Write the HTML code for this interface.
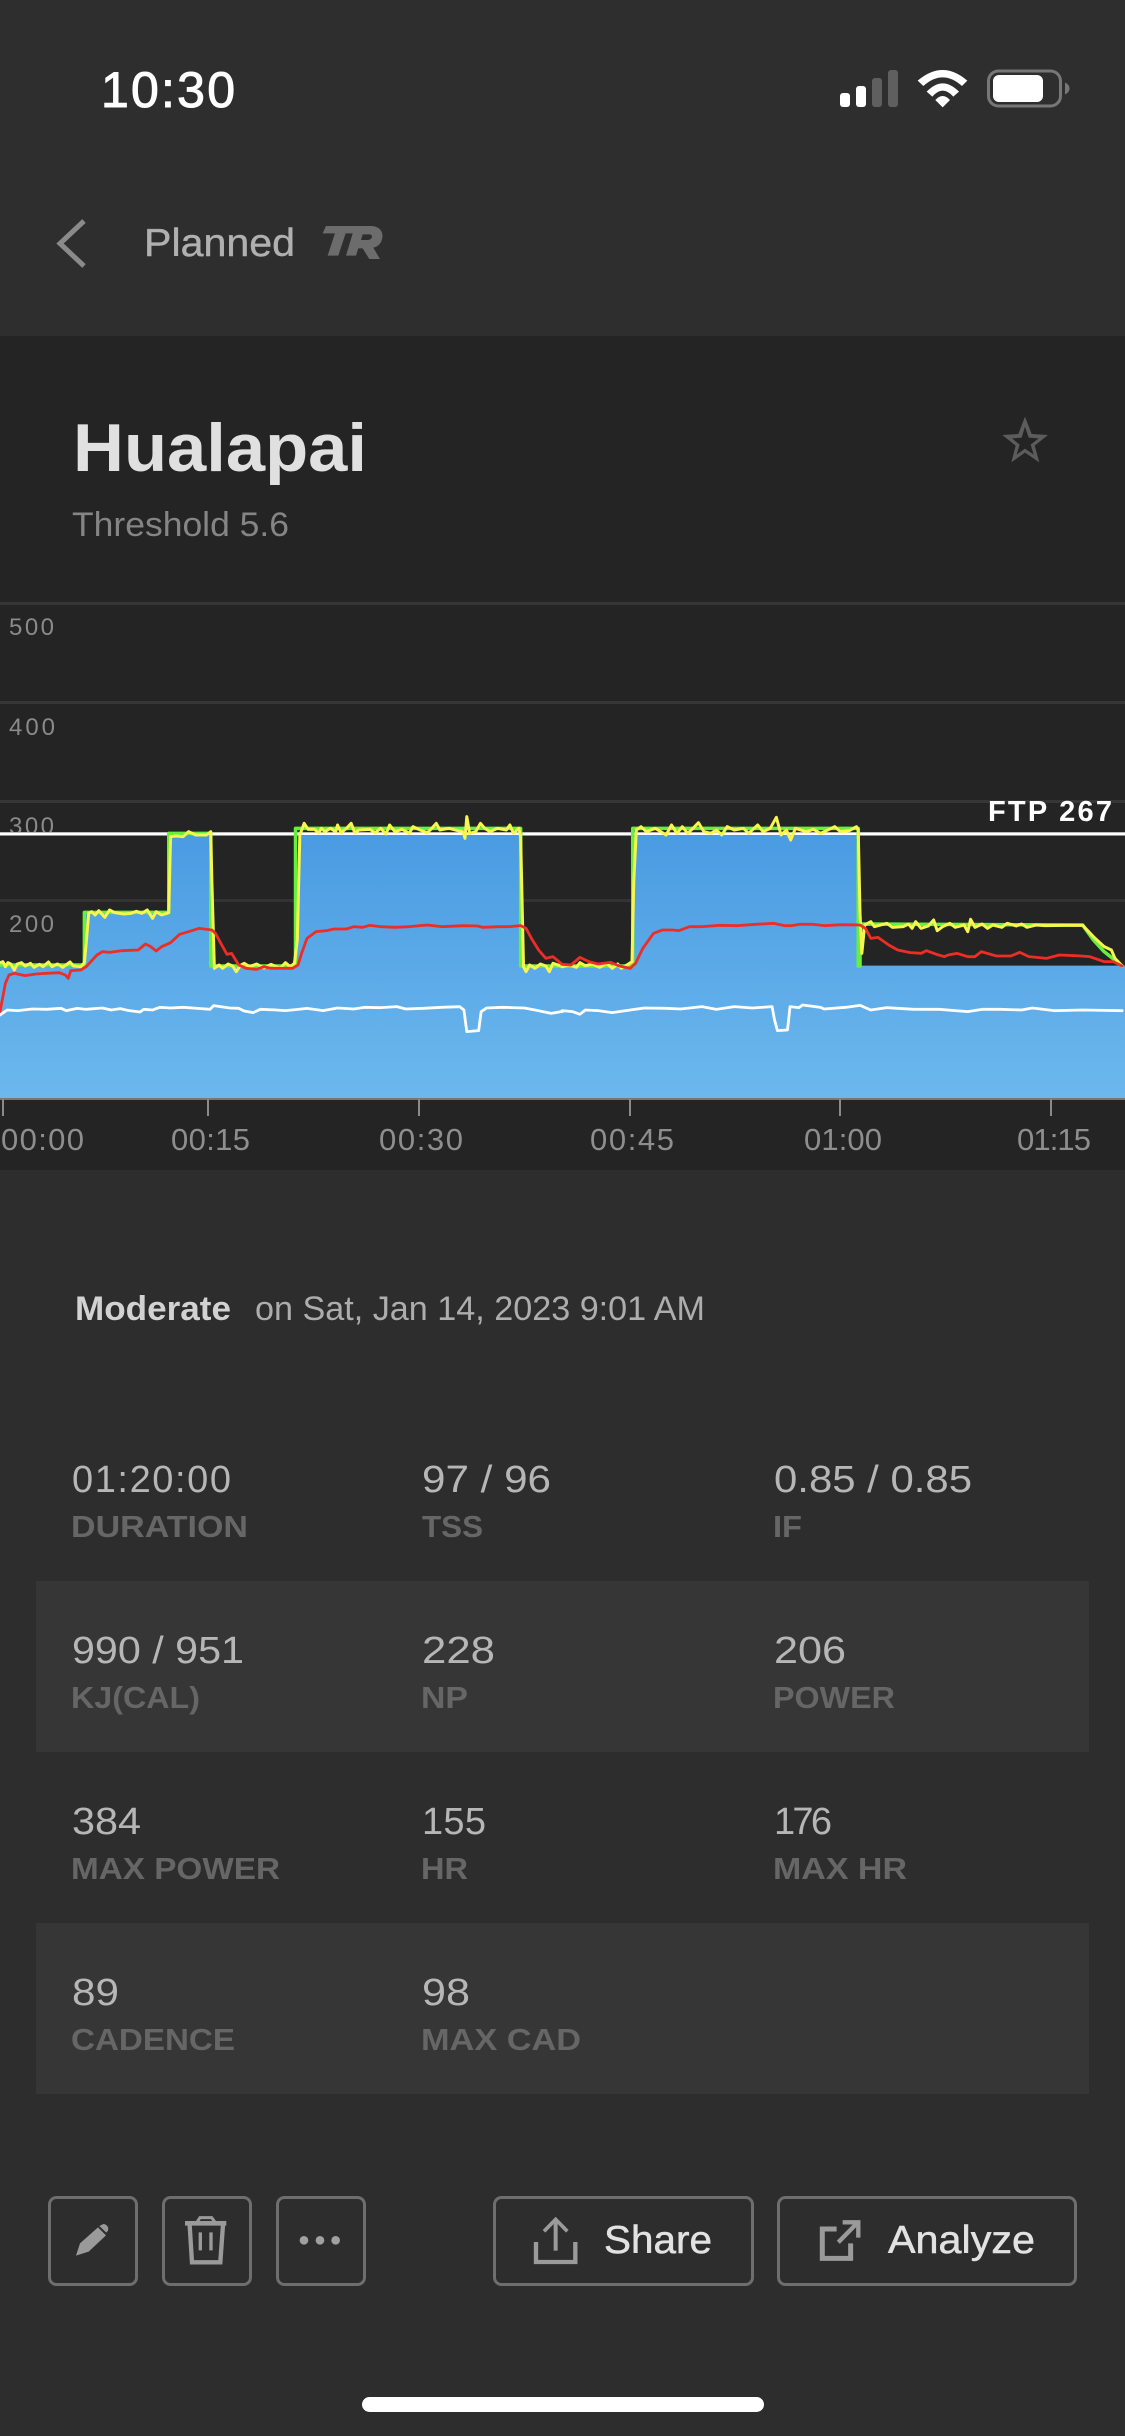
<!DOCTYPE html>
<html lang="en">
<head>
<meta charset="utf-8">
<title>Hualapai</title>
<style>
html,body{margin:0;padding:0;background:#2d2d2d;width:1125px;height:2436px;overflow:hidden}
svg{display:block}
text{font-family:"Liberation Sans",sans-serif}
.v{font-size:38px;fill:#b6b6b6}
.l{font-size:31px;font-weight:700;fill:#666}
.y{font-size:24px;fill:#8a8a8a}
.x{font-size:31px;fill:#8e8e8e}
.line{fill:none;vector-effect:non-scaling-stroke;stroke-linejoin:round;stroke-linecap:round}
</style>
</head>
<body>
<svg width="1125" height="2436" viewBox="0 0 1125 2436" xmlns="http://www.w3.org/2000/svg">
<defs>
<linearGradient id="blue" x1="0" y1="0" x2="0" y2="1"><stop offset="0" stop-color="#4a9be2"/><stop offset="1" stop-color="#6cb8ed"/></linearGradient>
</defs>

<!-- backgrounds -->
<rect width="1125" height="2436" fill="#2d2d2d"/>
<rect width="1125" height="336" fill="#2e2e2e"/>
<rect y="336" width="1125" height="834" fill="#242424"/>

<!-- status bar -->
<text x="101" y="107" font-size="50" fill="#fff" stroke="#fff" stroke-width="1" textLength="134" lengthAdjust="spacing">10:30</text>
<rect x="840" y="93" width="10" height="14" rx="3" fill="#fff"/>
<rect x="856" y="86" width="10" height="21" rx="3" fill="#fff"/>
<rect x="872" y="78" width="10" height="29" rx="3" fill="#5f5f5f"/>
<rect x="888" y="70" width="10" height="37" rx="3" fill="#5f5f5f"/>
<g transform="translate(830,60) scale(.3333)" fill="#fff">
<path d="M263 62Q338 -2 412 62L396 78Q338 26 280 78Z"/>
<path d="M290 95Q338 45 387 95L370 110Q338 74 307 110Z"/>
<path d="M316 120Q338 96 360 120L338 142Z"/>
</g>
<rect x="988.5" y="71" width="72" height="35" rx="10" fill="none" stroke="#777" stroke-width="3"/>
<rect x="993" y="75" width="50" height="27" rx="6" fill="#fff"/>
<path d="M1065 82.5C1068 84 1069.500 86 1069.500 88.500C1069.500 91 1068 93 1065 94.500Z" fill="#777"/>

<!-- nav -->
<path d="M84 221L60 243.500L84 266" fill="none" stroke="#8a8a8a" stroke-width="5"/>
<text x="144" y="256" font-size="39" fill="#b0b0b0" stroke="#b0b0b0" stroke-width=".4" textLength="151" lengthAdjust="spacingAndGlyphs">Planned</text>
<g transform="translate(40,205) scale(.3333)" fill="#6c6c6c">
<path d="M848 85L858 63H952L944 85H917L895 152H863L885 85Z"/>
<path fill-rule="evenodd" d="M945 63H992C1020 63 1032 82 1026 103C1022 118 1012 125 1000 128L1020 162H988L968 130H955L948 152H918ZM968 88L963 105H985C998 103 1000 88 988 88Z"/>
</g>

<!-- title -->
<text x="73" y="471" font-size="68" font-weight="700" fill="#e0e0e0" textLength="294" lengthAdjust="spacingAndGlyphs">Hualapai</text>
<text x="72" y="536" font-size="34" fill="#858585" textLength="217" lengthAdjust="spacingAndGlyphs">Threshold 5.6</text>
<g transform="translate(990,410) scale(.3333)" fill="#5c5c5c">
<path fill-rule="evenodd" d="M105 20L125 72L174 75L134 107L148 157L105 128L64 157L77 107L37 75L85 72ZM105 50L95 83L66 85L89 104L80 134L105 116L131 134L122 104L146 85L116 83Z"/>
</g>

<!-- chart grid -->
<rect y="602" width="1125" height="3" fill="#363636"/>
<rect y="701" width="1125" height="3" fill="#363636"/>
<rect y="800" width="1125" height="3" fill="#363636"/>
<rect y="899" width="1125" height="3" fill="#333"/>
<text class="y" x="9" y="635" textLength="45" lengthAdjust="spacing">500</text>
<text class="y" x="9" y="735" textLength="46" lengthAdjust="spacing">400</text>
<text class="y" x="9" y="834" textLength="45" lengthAdjust="spacing">300</text>
<text class="y" x="9" y="932" textLength="45" lengthAdjust="spacing">200</text>
<rect y="832" width="1125" height="1" fill="#777"/>
<rect y="832.500" width="1125" height="3" fill="#fff"/>
<text x="988" y="821" font-size="29" font-weight="700" fill="#fff" textLength="124" lengthAdjust="spacing">FTP 267</text>

<!-- left half of chart -->
<g transform="translate(0,780) scale(.35907,.33333)">
<path d="M0 560H235L240 400H470L475 165H587L595 560H825L832 165H1452L1458 560H1570V955H0Z" fill="url(#blue)"/>
</g>
<g transform="translate(562,780) scale(.35907,.33333)">
<path d="M0 560H195L205 165H825L830 557H1568V955H0Z" fill="url(#blue)"/>
</g>

<g transform="translate(0,780) scale(.35907,.33333)">
<polyline class="line" stroke="#66f03c" stroke-width="3.500" points="0,555 235,555 235,397 470,397 470,160 587,160 587,558 823,558 823,145 1450,145 1450,558 1568,558"/>
<polyline class="line" stroke="#f6f64e" stroke-width="3" points="0,548 8,545 15,560 22,548 30,552 40,570 48,552 60,548 70,558 85,550 95,562 110,553 120,560 135,546 145,560 160,552 175,562 195,546 205,558 225,560 235,548 240,490 247,400 255,395 265,405 275,392 292,412 305,390 320,398 345,402 365,400 380,394 395,400 410,390 425,415 435,395 450,405 470,398 475,170 490,168 510,170 525,155 545,165 575,165 587,155 590,300 597,565 610,555 620,565 635,552 648,558 658,575 670,556 680,550 695,560 715,552 735,564 755,553 780,565 795,548 808,560 820,550 828,480 835,165 847,130 858,148 875,148 888,158 895,145 905,155 920,145 935,155 940,135 950,158 965,145 978,130 988,158 1000,150 1030,148 1045,158 1060,145 1075,162 1085,135 1100,155 1120,148 1140,160 1150,140 1170,150 1190,158 1200,148 1215,130 1225,150 1250,145 1275,152 1290,155 1295,175 1300,110 1308,160 1325,155 1338,130 1350,145 1365,155 1385,145 1410,150 1420,135 1430,160 1445,145 1450,170 1458,560 1465,575 1475,555 1490,565 1505,552 1520,558 1530,575 1540,550 1568,560"/>
<polyline class="line" stroke="#ee2d26" stroke-width="2.800" points="0,695 8,650 15,610 25,585 40,580 70,587 100,582 130,580 165,578 182,585 190,595 197,572 225,570 240,560 270,525 285,515 305,517 340,512 385,510 405,492 420,500 435,513 450,500 475,488 500,463 525,455 555,445 590,450 600,460 615,490 632,523 645,520 665,555 685,565 715,568 735,560 755,565 785,565 815,565 830,555 840,520 855,475 880,455 910,452 930,447 965,447 985,440 1010,442 1030,436 1060,440 1100,442 1140,440 1190,435 1230,440 1290,437 1330,438 1345,442 1390,440 1420,440 1450,437 1465,445 1480,475 1500,510 1520,535 1540,530 1568,555"/>
<polyline class="line" stroke="#fff" stroke-width="2.800" points="0,705 20,690 50,692 90,687 130,688 170,685 185,692 215,685 240,688 285,684 310,690 335,686 360,692 390,696 400,688 425,690 445,682 475,684 510,682 560,686 585,688 595,677 640,684 665,685 680,693 705,698 725,688 770,690 795,692 830,688 855,685 900,692 940,684 985,687 1015,682 1060,683 1105,680 1130,687 1180,685 1230,682 1280,680 1292,690 1300,755 1333,752 1340,695 1355,684 1400,682 1460,684 1490,690 1535,700 1568,694"/>
</g>

<!-- right half of chart -->
<g transform="translate(562,780) scale(.35907,.33333)">
<polyline class="line" stroke="#66f03c" stroke-width="3.500" points="0,558 197,558 197,145 825,145 825,558 830,558 830,432 1450,435 1480,480 1510,515 1560,558"/>
<polyline class="line" stroke="#f6f64e" stroke-width="3" points="0,560 20,555 40,562 50,548 65,557 85,552 105,562 125,550 140,565 155,552 165,565 185,552 195,545 200,300 207,150 220,140 235,155 260,145 275,155 290,165 305,135 320,160 335,140 350,160 365,145 380,128 395,155 415,160 430,150 445,165 460,140 480,150 505,145 520,160 545,135 560,155 580,145 597,112 610,165 625,150 637,180 650,145 680,155 700,148 720,160 740,150 760,140 775,155 800,152 820,140 825,150 830,400 835,520 843,435 860,425 870,440 905,430 920,442 950,440 965,432 975,445 985,425 1000,445 1020,438 1035,420 1045,452 1060,440 1080,430 1095,442 1120,435 1130,455 1138,418 1150,442 1170,432 1185,445 1200,435 1225,442 1240,430 1265,438 1280,432 1295,442 1320,435 1345,437 1400,436 1450,436 1480,470 1510,500 1530,510 1540,535 1560,558"/>
<polyline class="line" stroke="#ee2d26" stroke-width="2.800" points="0,553 25,555 50,532 75,545 100,552 135,547 160,558 190,565 205,550 225,505 255,460 280,450 310,450 325,452 355,440 390,440 440,436 490,437 540,433 590,430 620,437 640,437 660,433 700,433 730,437 780,434 830,435 845,445 860,475 880,472 910,495 935,510 970,518 1000,520 1015,512 1040,522 1065,530 1075,525 1100,520 1130,530 1150,530 1168,515 1210,528 1250,528 1275,517 1300,530 1350,535 1385,525 1430,527 1470,530 1510,545 1535,545 1560,558"/>
<polyline class="line" stroke="#fff" stroke-width="2.800" points="0,692 30,695 50,703 65,690 100,692 140,698 190,690 230,684 290,685 330,687 390,680 430,688 480,680 530,684 585,680 592,720 600,752 628,750 635,680 660,683 670,675 720,682 730,687 790,682 830,676 860,690 905,683 980,688 1050,688 1130,695 1170,688 1220,688 1280,690 1310,684 1370,692 1450,690 1560,692"/>
</g>

<!-- axis -->
<rect y="1098" width="1125" height="2" fill="#777"/>
<g fill="#8a8a8a">
<rect x="2" y="1099" width="2" height="17"/>
<rect x="207" y="1099" width="2" height="17"/>
<rect x="418" y="1099" width="2" height="17"/>
<rect x="629" y="1099" width="2" height="17"/>
<rect x="839" y="1099" width="2" height="17"/>
<rect x="1050" y="1099" width="2" height="17"/>
</g>
<text class="x" x="1" y="1150" textLength="83" lengthAdjust="spacing">00:00</text>
<text class="x" x="171" y="1150" textLength="79" lengthAdjust="spacing">00:15</text>
<text class="x" x="379" y="1150" textLength="84" lengthAdjust="spacing">00:30</text>
<text class="x" x="590" y="1150" textLength="84" lengthAdjust="spacing">00:45</text>
<text class="x" x="804" y="1150" textLength="78" lengthAdjust="spacing">01:00</text>
<text class="x" x="1017" y="1150" textLength="74" lengthAdjust="spacing">01:15</text>

<!-- meta line -->
<text x="75" y="1320" font-size="34" font-weight="700" fill="#d2d2d2" textLength="156" lengthAdjust="spacingAndGlyphs">Moderate</text>
<text x="255" y="1320" font-size="34" fill="#adadad" textLength="450" lengthAdjust="spacingAndGlyphs">on Sat, Jan 14, 2023 9:01 AM</text>

<!-- stats -->
<rect x="36" y="1581" width="1053" height="171" fill="#363636"/>
<rect x="36" y="1923" width="1053" height="171" fill="#363636"/>

<text class="v" x="72" y="1492" textLength="159" lengthAdjust="spacing">01:20:00</text>
<text class="v" x="422" y="1492" textLength="129" lengthAdjust="spacingAndGlyphs">97 / 96</text>
<text class="v" x="774" y="1492" textLength="198" lengthAdjust="spacingAndGlyphs">0.85 / 0.85</text>
<text class="l" x="71" y="1537" textLength="177" lengthAdjust="spacingAndGlyphs">DURATION</text>
<text class="l" x="422" y="1537" textLength="61" lengthAdjust="spacingAndGlyphs">TSS</text>
<text class="l" x="773" y="1537" textLength="29" lengthAdjust="spacingAndGlyphs">IF</text>

<text class="v" x="72" y="1663" textLength="172" lengthAdjust="spacingAndGlyphs">990 / 951</text>
<text class="v" x="422" y="1663" textLength="73" lengthAdjust="spacingAndGlyphs">228</text>
<text class="v" x="774" y="1663" textLength="72" lengthAdjust="spacingAndGlyphs">206</text>
<text class="l" x="71" y="1708" textLength="129" lengthAdjust="spacingAndGlyphs">KJ(CAL)</text>
<text class="l" x="421" y="1708" textLength="47" lengthAdjust="spacingAndGlyphs">NP</text>
<text class="l" x="773" y="1708" textLength="122" lengthAdjust="spacingAndGlyphs">POWER</text>

<text class="v" x="72" y="1834" textLength="69" lengthAdjust="spacingAndGlyphs">384</text>
<text class="v" x="422" y="1834" textLength="64" lengthAdjust="spacing">155</text>
<text class="v" x="774" y="1834" textLength="58" lengthAdjust="spacing">176</text>
<text class="l" x="71" y="1879" textLength="209" lengthAdjust="spacingAndGlyphs">MAX POWER</text>
<text class="l" x="421" y="1879" textLength="47" lengthAdjust="spacingAndGlyphs">HR</text>
<text class="l" x="773" y="1879" textLength="134" lengthAdjust="spacingAndGlyphs">MAX HR</text>

<text class="v" x="72" y="2005" textLength="47" lengthAdjust="spacingAndGlyphs">89</text>
<text class="v" x="422" y="2005" textLength="48" lengthAdjust="spacingAndGlyphs">98</text>
<text class="l" x="71" y="2050" textLength="164" lengthAdjust="spacingAndGlyphs">CADENCE</text>
<text class="l" x="421" y="2050" textLength="160" lengthAdjust="spacingAndGlyphs">MAX CAD</text>

<!-- buttons -->
<g fill="none" stroke="#6e6e6e" stroke-width="3">
<rect x="49.500" y="2197.500" width="87" height="87" rx="7"/>
<rect x="163.500" y="2197.500" width="87" height="87" rx="7"/>
<rect x="277.500" y="2197.500" width="87" height="87" rx="7"/>
<rect x="494.500" y="2197.500" width="258" height="87" rx="7"/>
<rect x="778.500" y="2197.500" width="297" height="87" rx="7"/>
</g>
<g transform="translate(40,2190) scale(.3333)">
<path d="M108 197L120 160L174 112L198 136L146 185Z" fill="#9a9a9a"/>
<path d="M178 108L190 102Q200 102 205 114L204 122L199 128Z" fill="#9a9a9a"/>
<g fill="none" stroke="#9a9a9a">
<path d="M435 100H559" stroke-width="14"/>
<path d="M472 95L480 83H515L524 95" stroke-width="9"/>
<path d="M449 105L456 217H541L549 105" stroke-width="13"/>
<path d="M481 127V181M513 127V181" stroke-width="10"/>
</g>
<g fill="#a0a0a0"><circle cx="792" cy="151" r="13"/><circle cx="840" cy="151" r="13"/><circle cx="887" cy="151" r="13"/></g>
</g>
<g transform="translate(490,2190) scale(.3333)" fill="none" stroke="#9a9a9a">
<path d="M197 182V90" stroke-width="12"/>
<path d="M162 124L197 88L232 124" stroke-width="11"/>
<path d="M138 156V216H256V156" stroke-width="13"/>
<path d="M1040 117H997V205H1082V160" stroke-width="15"/>
<path d="M1045 157L1103 98" stroke-width="13"/>
<path d="M1058 97H1105V143" stroke-width="13"/>
</g>
<text x="604" y="2253" font-size="39" fill="#e2e2e2" stroke="#e2e2e2" stroke-width=".5" textLength="108" lengthAdjust="spacingAndGlyphs">Share</text>
<text x="888" y="2253" font-size="39" fill="#e2e2e2" stroke="#e2e2e2" stroke-width=".5" textLength="147" lengthAdjust="spacingAndGlyphs">Analyze</text>

<!-- home indicator -->
<rect x="362" y="2397" width="402" height="15" rx="7.500" fill="#fff"/>
</svg>
</body>
</html>
